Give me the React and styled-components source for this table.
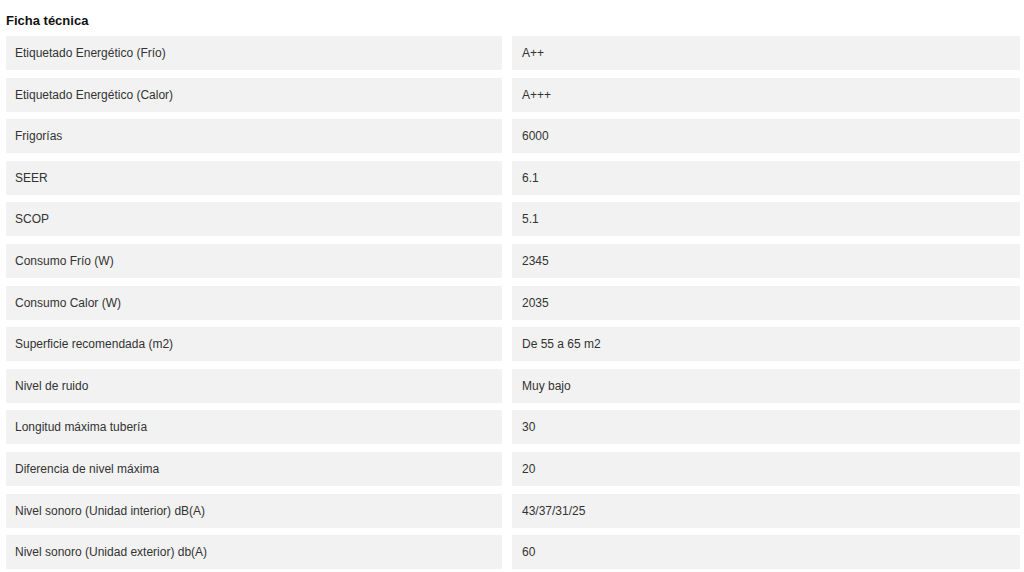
import React from "react";
import styled, { createGlobalStyle } from "styled-components";

const GlobalStyle = createGlobalStyle`
  body {
    margin: 0;
    background: #ffffff;
    font-family: "Liberation Sans", Arial, sans-serif;
  }
`;

const Wrapper = styled.div`
  padding: 13px 4px 0 6px;
  width: 1024px;
  box-sizing: border-box;
`;

const Title = styled.h3`
  margin: 0 0 8px 0;
  font-size: 13px;
  font-weight: bold;
  color: #111111;
  line-height: 15px;
`;

const Table = styled.div`
  display: grid;
  grid-template-columns: 496px 508px;
  column-gap: 10px;
  row-gap: 7.6px;
`;

const Cell = styled.div`
  height: 34px;
  background: #f2f2f2;
  display: flex;
  align-items: center;
  padding-left: ${(props) => (props.value ? "10px" : "9px")};
  font-size: 12px;
  color: #333333;
`;

const specs = [
  ["Etiquetado Energético (Frío)", "A++"],
  ["Etiquetado Energético (Calor)", "A+++"],
  ["Frigorías", "6000"],
  ["SEER", "6.1"],
  ["SCOP", "5.1"],
  ["Consumo Frío (W)", "2345"],
  ["Consumo Calor (W)", "2035"],
  ["Superficie recomendada (m2)", "De 55 a 65 m2"],
  ["Nivel de ruido", "Muy bajo"],
  ["Longitud máxima tubería", "30"],
  ["Diferencia de nivel máxima", "20"],
  ["Nivel sonoro (Unidad interior) dB(A)", "43/37/31/25"],
  ["Nivel sonoro (Unidad exterior) db(A)", "60"],
];

const App = () => {
  return (
    <Wrapper>
      <GlobalStyle />
      <Title>Ficha técnica</Title>
      <Table>
        {specs.map(([label, value]) => (
          <React.Fragment key={label}>
            <Cell>{label}</Cell>
            <Cell value>{value}</Cell>
          </React.Fragment>
        ))}
      </Table>
    </Wrapper>
  );
};

export default App;
